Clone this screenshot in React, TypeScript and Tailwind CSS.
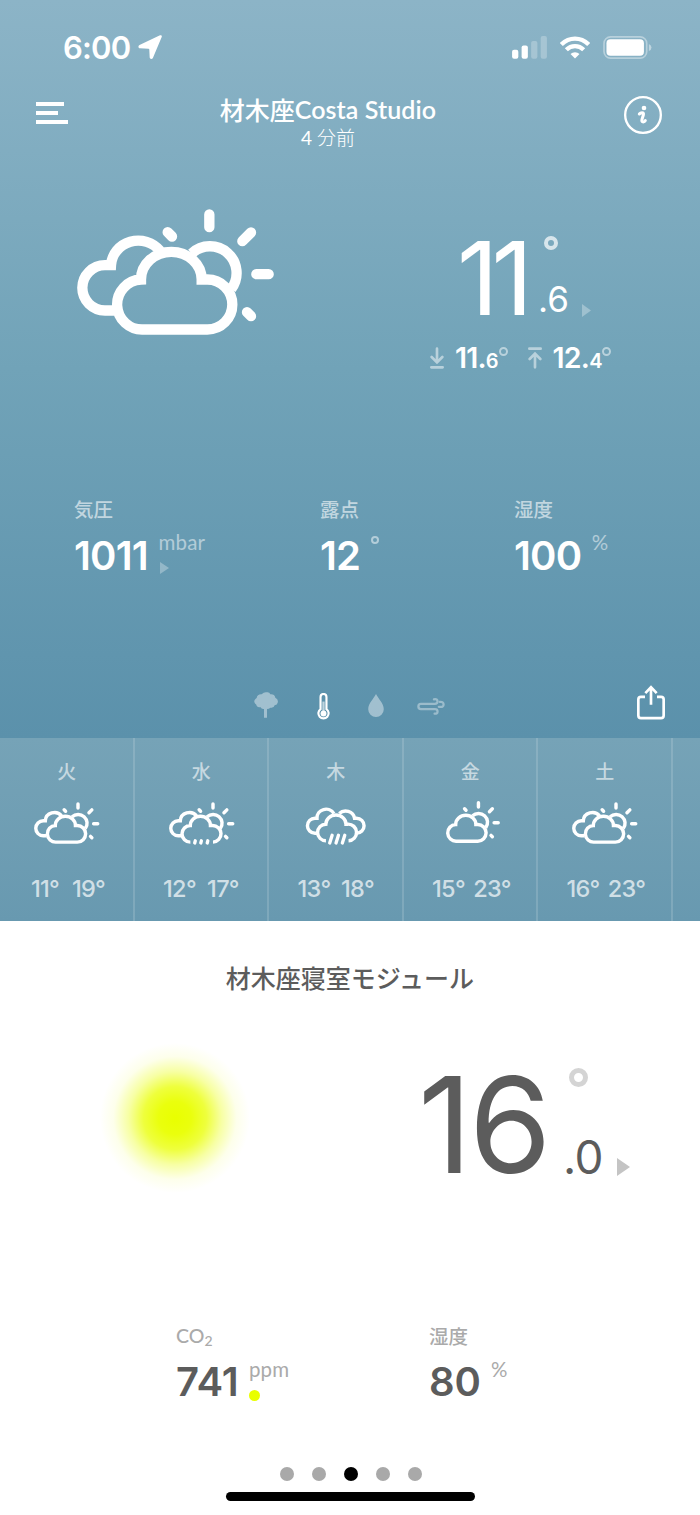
import type { ReactNode } from "react";
import clsx from "clsx";

type Weather = "cloudy-sun" | "drizzle" | "rain" | "sun-cloud";

const FORECAST: { day: string; weather: Weather; low: number; high: number }[] = [
  { day: "火", weather: "cloudy-sun", low: 11, high: 19 },
  { day: "水", weather: "drizzle", low: 12, high: 17 },
  { day: "木", weather: "rain", low: 13, high: 18 },
  { day: "金", weather: "sun-cloud", low: 15, high: 23 },
  { day: "土", weather: "cloudy-sun", low: 16, high: 23 },
];

const VIEW_BOX: Record<Weather, string> = {
  "cloudy-sun": "81 57 591 377",
  drizzle: "81 57 591 377",
  rain: "57 57 591 377",
  "sun-cloud": "141 66 531 377",
};

const BACK_CLOUD = "M193 361 H165 A68 68 0 0 1 165 225 H183 A82 78 0 0 1 330 182";
const FRONT_CLOUD = "M273 268 A91 83 0 0 1 455 268 H472 A75 75 0 0 1 472 418 H280 A75 75 0 0 1 273 268 Z";
const OPEN_CLOUD = "M274 418 A75 75 0 0 1 273 268 A91 83 0 0 1 455 268 H472 A75 75 0 0 1 478 418";

function Sun() {
  return (
    <>
      <path d="M425 190 A80 80 0 0 1 544 296" />
      <g strokeLinecap="round">
        <path d="M478 73 V111 M577 153 L603 127 M619 252 H656 M591 366 L603 378 M353 126 L366 139" />
      </g>
    </>
  );
}

function WeatherIcon({ weather, className }: { weather: Weather; className: string }) {
  return (
    <svg
      viewBox={VIEW_BOX[weather]}
      className={clsx("overflow-visible text-white", className)}
      fill="none"
      stroke="currentColor"
      strokeWidth={31}
    >
      {weather !== "rain" && <Sun />}
      {(weather === "cloudy-sun" || weather === "drizzle") && <path d={BACK_CLOUD} />}
      {(weather === "cloudy-sun" || weather === "sun-cloud") && <path d={FRONT_CLOUD} />}
      {weather === "drizzle" && (
        <>
          <path d={OPEN_CLOUD} />
          <path strokeLinecap="round" strokeWidth={30} d="M318 406 L313 426 M373 406 L368 426 M431 406 L426 426" />
        </>
      )}
      {weather === "rain" && (
        <>
          <path d="M185 338 H165 A68 68 0 0 1 165 202 H183 A82 78 0 0 1 336 160" />
          <path d="M526 338 H540 A68 68 0 0 0 540 202 H522 A82 78 0 0 0 384 160" />
          <path d="M264 406 A75 75 0 0 1 263 256 A91 83 0 0 1 445 256 H462 A75 75 0 0 1 468 406" />
          <path strokeLinecap="round" strokeWidth={30} d="M320 356 L298 426 M377 356 L355 426 M434 356 L412 426" />
        </>
      )}
    </svg>
  );
}

function Triangle({ className }: { className: string }) {
  return (
    <svg viewBox="0 0 9 13" className={className} fill="currentColor" preserveAspectRatio="none">
      <path d="M0 0 L9 6.5 L0 13 Z" />
    </svg>
  );
}

function StatusBar() {
  return (
    <div className="flex h-[94px] items-center pl-[63px] pr-[48px] text-white">
      <span className="w-[75px] text-[31px] leading-none font-semibold tracking-[-0.8px]">6:00</span>
      <svg viewBox="0 0 24 24" className="h-6 w-6" fill="currentColor">
        <path d="M22 .3 C23.300 -.2 24.200 .9 23.700 2.100 L14.900 23 C14.200 24.500 11.700 24.200 11.700 22.600 L11.300 14.500 Q11.200 13.800 10.500 13.700 L1.900 13.300 C.1 13.100 -.1 10.700 1.500 10 Z" />
      </svg>
      <div className="ml-auto flex items-center">
        <svg viewBox="0 0 106 70" className="h-[23px] w-[35px]" fill="currentColor">
          <rect x="0" y="42" width="19" height="27" rx="6" />
          <rect x="29" y="29" width="19" height="40" rx="6" />
          <rect x="58" y="15" width="19" height="54" rx="6" opacity=".25" />
          <rect x="87" y="0" width="19" height="69" rx="6" opacity=".25" />
        </svg>
        <svg viewBox="0 0 90 68" className="ml-[13px] h-[23px] w-[30px]" fill="none" stroke="currentColor" strokeWidth="13">
          <path d="M4 25 Q22 7.500 45 7.500 T86 25" />
          <path d="M19 41 Q30 30 45 30 T71 41" />
          <path d="M45 67 L31.500 53.500 Q37 48 45 48 T58.500 53.500 Z" fill="currentColor" stroke="none" />
        </svg>
        <svg viewBox="0 0 148 70" className="ml-[13px] h-[23px] w-[49px]" fill="currentColor">
          <rect x="2.500" y="2.500" width="130" height="65" rx="20" fill="none" stroke="currentColor" strokeWidth="5" opacity=".4" />
          <rect x="10" y="10" width="114" height="50" rx="12" />
          <path d="M139 24 Q147 28 147 35 T139 46 Z" opacity=".45" />
        </svg>
      </div>
    </div>
  );
}

function Header() {
  return (
    <header className="flex h-[66px] items-start pl-9 pr-[38.500px] text-white">
      <div className="mt-2 flex w-[183px] flex-col gap-[5px]">
        <span className="h-1 w-7 bg-current" />
        <span className="h-1 w-[22px] bg-current" />
        <span className="h-1 w-8 bg-current" />
      </div>
      <div className="flex w-[218px] flex-col items-center">
        <h1 className="mt-[3px] flex h-[25px] items-center text-[25px] leading-none font-medium whitespace-nowrap">
          <span className="font-['Noto_Sans_CJK_JP',sans-serif]">材木座</span>
          <span className="font-['Lato',sans-serif] text-[25px] font-semibold tracking-[0.1px]">Costa Studio</span>
        </h1>
        <p className="mt-[6px] font-['Lato','Noto_Sans_CJK_JP',sans-serif] text-[19px] leading-none font-normal">
          4 <span className="font-light">分前</span>
        </p>
      </div>
      <svg viewBox="0 0 114 114" className="mt-[2px] ml-auto h-[38px] w-[38px]" fill="none" stroke="currentColor" strokeWidth="7">
        <circle cx="57" cy="57" r="53.500" />
        <circle cx="60" cy="36" r="7" fill="currentColor" stroke="none" />
        <path d="M46 54 Q49 50 54 50 Q60 50 58 57 L54 70 Q52 78 58 78 Q62 78 64 74" strokeWidth="9" strokeLinecap="round" />
      </svg>
    </header>
  );
}

function Extreme({ whole, fraction, kind }: { whole: string; fraction: string; kind: "low" | "high" }) {
  return (
    <div className="flex items-start">
      <svg viewBox="0 0 42 66" className="h-[22px] w-[14px]" fill="none" stroke="currentColor" strokeWidth="8" strokeLinecap="round" opacity=".5">
        {kind === "low" ? (
          <path d="M4 61 H38 M21 5 V45 M5 30 L21 46 L37 30" />
        ) : (
          <path d="M4 5 H38 M21 61 V21 M5 36 L21 20 L37 36" />
        )}
      </svg>
      <span className="ml-[11px] -mt-[3px] text-[28.500px] leading-none font-semibold tracking-[-0.8px]">{whole}.</span>
      <span className="mt-[4px] text-[20px] leading-none font-semibold">{fraction}</span>
      <span className="h-[9px] w-[9px] rounded-full border-2 border-white/50" />
    </div>
  );
}

function Outdoor() {
  return (
    <div className="flex h-[330px]">
      <div className="w-[429px] pt-[49px] pl-[77px]">
        <WeatherIcon weather="cloudy-sun" className="h-[126px] w-[197px]" />
      </div>
      <div className="text-white">
        <div className="flex h-[187px] items-start pt-[67px] pl-[28px]">
          <span className="w-[81px] text-[102px] leading-none tracking-[-7px]">11</span>
          <div className="mt-[9px] flex h-[81px] w-[48px] flex-col justify-between">
            <span className="ml-[6px] h-[14px] w-[14px] rounded-full border-4 border-white/70" />
            <span className="text-[35px] leading-none">.6</span>
          </div>
          <Triangle className="mt-[77px] -ml-[4px] h-[13px] w-[9px] text-white/30" />
        </div>
        <div className="flex gap-[20px] pl-[1px]">
          <Extreme whole="11" fraction="6" kind="low" />
          <Extreme whole="12" fraction="4" kind="high" />
        </div>
      </div>
    </div>
  );
}

function Metric({
  label,
  value,
  unit,
  mark,
  dark,
  className,
}: {
  label: ReactNode;
  value: string;
  unit: ReactNode;
  mark?: ReactNode;
  dark?: boolean;
  className: string;
}) {
  return (
    <div className={clsx("flex flex-col", dark ? "text-[#5c5c5c]" : "text-white", className)}>
      <div
        className={clsx(
          "flex h-[19px] items-center font-['Noto_Sans_CJK_JP',sans-serif] text-[19.500px] leading-none font-medium",
          dark ? "text-[#aaaaaa]" : "text-white/60",
        )}
      >
        {label}
      </div>
      <div className={clsx("flex items-start", dark ? "mt-[17px]" : "mt-[18px]")}>
        <span
          className={clsx("text-[40px] leading-none font-semibold", dark ? "tracking-[-0.2px]" : "tracking-[-0.8px]")}
        >
          {value}
        </span>
        <div className={clsx("ml-[10.500px] flex flex-col items-start", dark ? "pt-px text-[#aaaaaa]" : "text-white/50")}>
          {unit}
          {mark}
        </div>
      </div>
    </div>
  );
}

function Unit({ children }: { children: string }) {
  return <span className="-mt-[4px] font-['Lato',sans-serif] text-[20.500px] leading-none tracking-[0.2px]">{children}</span>;
}

function Toolbar() {
  return (
    <div className="flex h-[78px] items-center pl-[254px] text-white">
      <svg viewBox="0 0 72 78" className="mt-[12px] h-[26px] w-6" fill="currentColor" opacity=".42">
        <path d="M30 77 V51 Q22 52 20 46 Q8 46 7 38 Q-2 32 2 24 Q5 19 8 18 Q10 6 23 7 Q30 -1 39 1 Q46 0 49 7 Q62 6 64 17 Q74 22 71 32 Q70 38 62 40 Q60 49 49 47 Q45 51 39 51 V77 Z" />
      </svg>
      <svg viewBox="0 0 38 82" className="mt-[15px] ml-[38.500px] h-[27px] w-[13px]" fill="none" stroke="currentColor" strokeWidth="6.500">
        <path d="M10 49 V12 Q10 3 19 3 T28 12 V49 A15.500 15.500 0 1 1 10 49 Z" />
        <path d="M19 26 V60" opacity=".6" strokeWidth="7" />
        <circle cx="19" cy="62" r="9" fill="currentColor" stroke="none" />
      </svg>
      <svg viewBox="0 0 46 68" className="mt-[13px] ml-[38px] h-[23px] w-4" fill="currentColor" opacity=".42">
        <path d="M23 0 C30 14 46 28 46 45 A23 23 0 0 1 0 45 C0 28 16 14 23 0 Z" />
      </svg>
      <svg viewBox="0 0 84 52" className="mt-[14px] ml-[33.500px] h-[17px] w-7" fill="none" stroke="currentColor" strokeWidth="7" strokeLinecap="round" opacity=".38">
        <path d="M51 4 Q62 2 62 11 Q62 18 54 18 H11 Q3.500 18 3.500 26 T11 34 H54 Q62 34 62 41 Q62 49 53 48" />
        <path d="M69 12 Q80.500 11 80.500 20 Q80.500 29 69 27 H66" />
      </svg>
      <svg viewBox="0 0 84 104" className="mt-[6px] ml-[192px] h-[35px] w-7" fill="none" stroke="currentColor" strokeWidth="8">
        <path d="M24 35 H12 Q4 35 4 43 V91 Q4 99 12 99 H72 Q80 99 80 91 V43 Q80 35 72 35 H60" />
        <path d="M42 59 V8 M25 24 L42 6 L59 24" />
      </svg>
    </div>
  );
}

function Forecast() {
  return (
    <section className="flex h-[183px] overflow-hidden bg-linear-to-b from-[#76a3b7] to-[#6899b0]">
      {FORECAST.map(({ day, weather, low, high }) => (
        <div
          key={day}
          className="flex w-[134.500px] shrink-0 flex-col items-center border-r-2 border-white/15 pl-[1px]"
        >
          <span className="mt-[23px] font-['Noto_Sans_CJK_JP',sans-serif] text-[19px] leading-none font-medium text-white/60">
            {day}
          </span>
          <WeatherIcon
            weather={weather}
            className={clsx("mt-[22px] h-[42px]", weather === "sun-cloud" ? "w-[59px]" : "w-[65.500px]")}
          />
          <div className="mt-[33px] flex text-[23.500px] leading-none font-medium tracking-[-0.7px] text-white/70">
            <span className="flex w-[43.500px] justify-center">{low}°</span>
            <span className="flex w-[43.500px] justify-center">{high}°</span>
          </div>
        </div>
      ))}
    </section>
  );
}

function Indoor() {
  return (
    <section className="flex h-[594px] flex-col items-center bg-white text-[#5c5c5c]">
      <h2 className="mt-[44px] font-['Noto_Sans_CJK_JP',sans-serif] text-[25px] leading-none font-medium">
        材木座寝室モジュール
      </h2>
      <div className="flex w-full">
        <div className="w-[418px] pt-[53px] pl-[100px]">
          <div className="h-[150px] w-[150px] rounded-full bg-[radial-gradient(closest-side,#e9ff00_0%,rgb(233_255_0/0.95)_22%,rgb(233_255_0/0.76)_42%,rgb(233_255_0/0.36)_62%,rgb(233_255_0/0.08)_82%,rgb(233_255_0/0)_100%)]" />
        </div>
        <div className="flex items-start pt-[68px]">
          <span className="w-[145px] text-[133px] leading-none tracking-[-3px]">16</span>
          <div className="mt-[10px] flex h-[112px] w-[54px] flex-col justify-between">
            <span className="ml-[6px] h-[19px] w-[19px] rounded-full border-[5px] border-[#d4d4d4]" />
            <span className="text-[46px] leading-none font-normal tracking-[-0.5px]">.0</span>
          </div>
          <Triangle className="mt-[100px] h-[18px] w-[13px] text-[#c4c4c4]" />
        </div>
      </div>
      <div className="mt-auto flex h-[141px] w-full pl-[176px]">
        <Metric
          dark
          className="w-[253px]"
          label={
            <span className="font-['Lato',sans-serif]">
              CO<sub className="text-[14px]">2</sub>
            </span>
          }
          value="741"
          unit={<Unit>ppm</Unit>}
          mark={<span className="mt-[10px] h-[11px] w-[11px] rounded-full bg-[#e9ff00]" />}
        />
        <Metric dark className="" label="湿度" value="80" unit={<Unit>%</Unit>} />
      </div>
      <div className="flex w-full flex-col items-center">
        <div className="flex gap-[18px] pl-px">
          {[0, 1, 2, 3, 4].map((page) => (
            <span key={page} className={clsx("h-[14px] w-[14px] rounded-full", page === 2 ? "bg-black" : "bg-[#a9a9a9]")} />
          ))}
        </div>
        <span className="mt-[11px] mb-[14px] h-[9px] w-[249px] rounded-full bg-black" />
      </div>
    </section>
  );
}

export default function App() {
  return (
    <main className="h-[1515px] w-[700px] overflow-hidden bg-white font-['Inter','Noto_Sans_CJK_JP',sans-serif]">
      <section className="flex h-[738px] flex-col bg-linear-to-b from-[#8cb4c7] via-[#71a3b8] to-[#5b91ab]">
        <StatusBar />
        <Header />
        <Outdoor />
        <div className="flex h-[170px] pt-[9px] pl-[74px]">
          <Metric
            className="w-[246px]"
            label="気圧"
            value="1011"
            unit={<Unit>mbar</Unit>}
            mark={<Triangle className="mt-[9px] ml-[2px] h-[12px] w-[9px] text-white/30" />}
          />
          <Metric
            className="w-[194px]"
            label="露点"
            value="12"
            unit={<span className="h-2 w-2 rounded-full border-2 border-white/50" />}
          />
          <Metric className="" label="湿度" value="100" unit={<Unit>%</Unit>} />
        </div>
        <Toolbar />
      </section>
      <Forecast />
      <Indoor />
    </main>
  );
}
